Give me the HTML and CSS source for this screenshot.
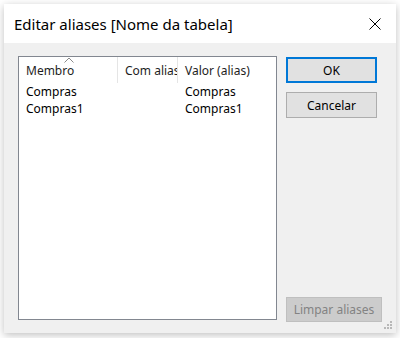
FILE: index.html
```html
<!DOCTYPE html>
<html lang="pt">
<head>
    <meta charset="UTF-8">
    <title>Editar aliases</title>
    <link rel="stylesheet" href="styles.css">
</head>
<body>
    <div class="dialog">
        <div class="titlebar">
            <span class="title">Editar aliases [Nome da tabela]</span>
            <svg class="close" width="12" height="12" viewBox="0 0 12 12">
                <path d="M0.5 0.5L11.5 11.5M11.5 0.5L0.5 11.5" stroke="#000" stroke-width="1"/>
            </svg>
        </div>

        <div class="content">
            <div class="listbox">
                <div class="header">
                    <div class="col col-member">
                        <svg class="sort" width="10" height="6" viewBox="0 0 10 6">
                            <path d="M0.5 5.5L5 1L9.5 5.5" stroke="#8a8a8a" fill="none"/>
                        </svg>
                        Membro
                    </div>
                    <div class="col col-alias">Com alias</div>
                    <div class="col col-value">Valor (alias)</div>
                </div>
                <div class="row">
                    <div class="cell col-member">Compras</div>
                    <div class="cell col-alias"></div>
                    <div class="cell col-value">Compras</div>
                </div>
                <div class="row">
                    <div class="cell col-member">Compras1</div>
                    <div class="cell col-alias"></div>
                    <div class="cell col-value">Compras1</div>
                </div>
            </div>

            <div class="buttons">
                <button class="btn btn-default">OK</button>
                <button class="btn">Cancelar</button>
                <div class="spacer"></div>
                <button class="btn btn-disabled" disabled>Limpar aliases</button>
            </div>
        </div>

        <div class="grip">
            <svg width="9" height="9" viewBox="0 0 9 9">
                <rect x="6" y="0" width="2" height="2" fill="#b8b8b8"/>
                <rect x="3" y="3" width="2" height="2" fill="#b8b8b8"/>
                <rect x="6" y="3" width="2" height="2" fill="#b8b8b8"/>
                <rect x="0" y="6" width="2" height="2" fill="#b8b8b8"/>
                <rect x="3" y="6" width="2" height="2" fill="#b8b8b8"/>
                <rect x="6" y="6" width="2" height="2" fill="#b8b8b8"/>
            </svg>
        </div>
    </div>
</body>
</html>
```

FILE: styles.css
```css
body {
    margin: 0;
    background: #ffffff;
    font-family: "Noto Sans", "Open Sans", sans-serif;
    width: 400px;
    height: 338px;
    overflow: hidden;
}

.dialog {
    position: relative;
    margin: 4px 0 0 4px;
    width: 392px;
    height: 329px;
    background: #f0f0f0;
    box-shadow: 0 2px 8px rgba(0, 0, 0, 0.25);
    display: flex;
    flex-direction: column;
}

.titlebar {
    height: 39px;
    background: #ffffff;
    display: flex;
    align-items: center;
    padding: 0 14px 0 10px;
}

.title {
    flex: 1;
    font-size: 15px;
    color: #000;
    padding-top: 1px;
}

.close {
    margin-right: 1px;
    margin-top: 1px;
}

.content {
    flex: 1;
    display: flex;
    padding: 13px 19px 9px 14px;
    gap: 9px;
}

.listbox {
    width: 257px;
    height: 262px;
    background: #ffffff;
    border: 1px solid #828790;
    font-size: 12px;
    color: #000;
}

.header {
    display: flex;
    height: 26px;
}

.header .col {
    position: relative;
    box-sizing: border-box;
    padding: 5px 0 0 7px;
    border-right: 1px solid #e5e5e5;
    white-space: nowrap;
    overflow: hidden;
    color: #1e1e1e;
}

.sort {
    position: absolute;
    left: 45px;
    top: 0;
}

.col-member {
    width: 99px;
}

.col-alias {
    width: 60px;
}

.col-value {
    flex: 1;
}

.header .col-value {
    border-right: none;
}

.row {
    display: flex;
    height: 17px;
    line-height: 17px;
}

.cell {
    box-sizing: border-box;
    padding-left: 7px;
    white-space: nowrap;
}

.buttons {
    width: 91px;
    display: flex;
    flex-direction: column;
    padding-top: 1px;
}

.btn {
    font-family: inherit;
    font-size: 12px;
    height: 26px;
    margin-bottom: 9px;
    background: #e1e1e1;
    border: 1px solid #adadad;
    color: #000;
    padding: 0;
}

.btn-default {
    border: 2px solid #0078d7;
}

.spacer {
    flex: 1;
}

.btn-disabled {
    width: 96px;
    height: 25px;
    margin-bottom: 2px;
    background: #cccccc;
    border-color: #bfbfbf;
    color: #838383;
}

.grip {
    position: absolute;
    right: 3px;
    bottom: 3px;
    line-height: 0;
}
```
